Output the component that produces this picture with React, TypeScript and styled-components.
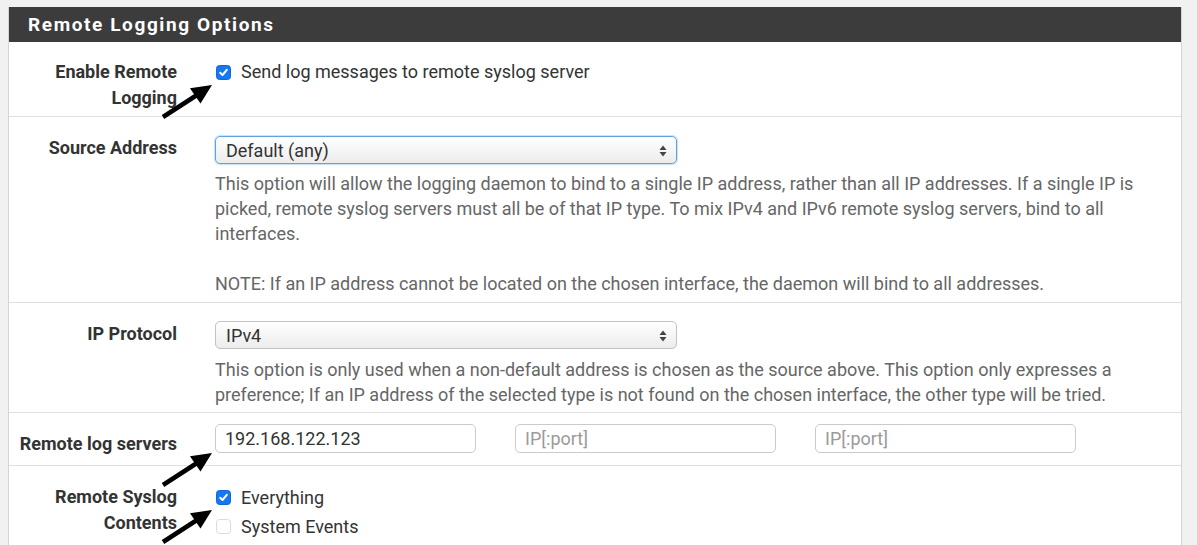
import React from "react";
import styled, { createGlobalStyle, css } from "styled-components";

const GlobalStyle = createGlobalStyle`
  html, body { margin: 0; padding: 0; }
  body {
    background: #f1f1f1;
    font-family: Roboto, "Liberation Sans", Arial, sans-serif;
    color: #333;
    overflow: hidden;
  }
  * { box-sizing: border-box; }
`;

const Page = styled.div`
  position: relative;
  padding: 7px 15px 0 8px;
  height: 545px;
  overflow: hidden;
`;

const Panel = styled.section`
  background: #fff;
  border: 1px solid #d4d4d4;
  border-top: none;
`;

const PanelHeading = styled.h2`
  margin: 0;
  height: 35px;
  display: flex;
  align-items: center;
  padding: 0 19px;
  background: #3c3c3c;
  color: #fff;
  font-size: 19px;
  font-weight: 700;
  letter-spacing: 1.6px;
`;

const Row = styled.div`
  display: grid;
  grid-template-columns: 191px 1fr;
  border-bottom: 1px solid #e0e0e0;
`;

const Label = styled.div<{ $pt: number; $pb: number }>`
  padding: ${(p) => p.$pt}px 23px ${(p) => p.$pb}px 2px;
  text-align: right;
  font-size: 18px;
  font-weight: 700;
  line-height: 26px;
  color: #333;
`;

const Field = styled.div<{ $pt: number; $pb: number }>`
  padding: ${(p) => p.$pt}px 15px ${(p) => p.$pb}px 15px;
  font-size: 18px;
  color: #333;
`;

const CheckLine = styled.label<{ $lh: number }>`
  display: flex;
  align-items: center;
  gap: 10px;
  height: ${(p) => p.$lh}px;
  line-height: ${(p) => p.$lh}px;
  color: #333;
  font-size: 18px;
  padding-left: 1px;
`;

const Box = styled.span<{ $checked: boolean }>`
  width: 15px;
  height: 15px;
  border-radius: 3.5px;
  display: inline-flex;
  align-items: center;
  justify-content: center;
  flex: none;
  ${(p) =>
    p.$checked
      ? css`
          background: #1677f2;
          border: 1px solid #1168d9;
        `
      : css`
          background: #fff;
          border: 1px solid #dcdcdc;
        `}
`;

const Check = ({ checked, children, lh }: { checked: boolean; children: React.ReactNode; lh: number }) => (
  <CheckLine $lh={lh}>
    <Box $checked={checked}>
      {checked && (
        <svg width="11" height="11" viewBox="0 0 11 11">
          <path d="M2.2 5.8 L4.5 8 L8.8 2.8" fill="none" stroke="#fff" strokeWidth="2" strokeLinecap="round" strokeLinejoin="round" />
        </svg>
      )}
    </Box>
    <span>{children}</span>
  </CheckLine>
);

const SelectWrap = styled.div<{ $focus?: boolean }>`
  position: relative;
  width: 462px;
  height: 28px;
  border-radius: 5px;
  border: 1px solid ${(p) => (p.$focus ? "#5ea2e0" : "#c2c2c2")};
  box-shadow: ${(p) => (p.$focus ? "0 0 1px 1px rgba(94,162,224,0.35)" : "none")};
  background: linear-gradient(#ffffff, #ececec);
  display: flex;
  align-items: center;
  padding-left: 10px;
  font-size: 18px;
  color: #333;
`;

const SelectArrows = styled.svg`
  position: absolute;
  right: 9px;
  top: 8px;
`;

const Select = ({ value, focus }: { value: string; focus?: boolean }) => (
  <SelectWrap $focus={focus}>
    {value}
    <SelectArrows width="8" height="12" viewBox="0 0 8 12">
      <polygon points="0.5,5 4,0.5 7.5,5" fill="#444" />
      <polygon points="0.5,7 4,11.5 7.5,7" fill="#444" />
    </SelectArrows>
  </SelectWrap>
);

const Help = styled.div<{ $mt: number }>`
  margin-top: ${(p) => p.$mt}px;
  line-height: 25px;
  color: #666;
  font-size: 18px;
`;

const Inputs = styled.div`
  display: flex;
  gap: 39px;
`;

const TextInput = styled.input`
  width: 261px;
  height: 29px;
  border: 1px solid #cbcbcb;
  border-radius: 5px;
  padding: 0 9px;
  font-family: Roboto, "Liberation Sans", Arial, sans-serif;
  font-size: 18px;
  color: #333;
  background: #fff;
  outline: none;
  &::placeholder {
    color: #9a9a9a;
  }
`;

const ArrowSvg = styled.svg<{ $x: number; $y: number }>`
  position: absolute;
  left: ${(p) => p.$x}px;
  top: ${(p) => p.$y}px;
  pointer-events: none;
`;

const Arrow = ({ x, y }: { x: number; y: number }) => (
  <ArrowSvg $x={x} $y={y} width="56" height="40" viewBox="0 0 56 40">
    <line x1="3" y1="37" x2="37" y2="15" stroke="#000" strokeWidth="4.5" />
    <polygon points="52,5 40.5,23.5 30,8.2" fill="#000" />
  </ArrowSvg>
);

export default function App() {
  return (
    <Page>
      <GlobalStyle />
      <Panel>
        <PanelHeading>Remote Logging Options</PanelHeading>

        <Row>
          <Label $pt={17} $pb={5}>Enable Remote Logging</Label>
          <Field $pt={17} $pb={5}>
            <Check checked lh={26}>Send log messages to remote syslog server</Check>
          </Field>
        </Row>

        <Row>
          <Label $pt={18} $pb={5}>Source Address</Label>
          <Field $pt={19} $pb={6}>
            <Select value="Default (any)" focus />
            <Help $mt={7}>
              This option will allow the logging daemon to bind to a single IP address, rather than all IP addresses. If a
              single IP is picked, remote syslog servers must all be of that IP type. To mix IPv4 and IPv6 remote syslog
              servers, bind to all interfaces.
              <br />
              <br />
              NOTE: If an IP address cannot be located on the chosen interface, the daemon will bind to all addresses.
            </Help>
          </Field>
        </Row>

        <Row>
          <Label $pt={18} $pb={5}>IP Protocol</Label>
          <Field $pt={18} $pb={5}>
            <Select value="IPv4" />
            <Help $mt={8}>
              This option is only used when a non-default address is chosen as the source above. This option only
              expresses a preference; If an IP address of the selected type is not found on the chosen interface, the
              other type will be tried.
            </Help>
          </Field>
        </Row>

        <Row>
          <Label $pt={18} $pb={8}>Remote log servers</Label>
          <Field $pt={11} $pb={12}>
            <Inputs>
              <TextInput defaultValue="192.168.122.123" />
              <TextInput placeholder="IP[:port]" />
              <TextInput placeholder="IP[:port]" />
            </Inputs>
          </Field>
        </Row>

        <Row>
          <Label $pt={18} $pb={8}>Remote Syslog Contents</Label>
          <Field $pt={17} $pb={8}>
            <Check checked lh={29}>Everything</Check>
            <Check checked={false} lh={29}>System Events</Check>
          </Field>
        </Row>
      </Panel>

      <Arrow x={160} y={80} />
      <Arrow x={160} y={448} />
      <Arrow x={160} y={505} />
    </Page>
  );
}
